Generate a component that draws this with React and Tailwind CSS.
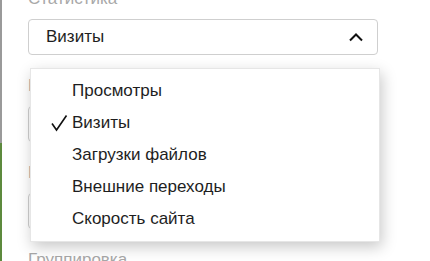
import React from "react";

function Chevron() {
  return (
    <svg width="16" height="10" viewBox="0 0 16 10" fill="none">
      <path d="M2 8.5 L8 2.5 L14 8.5" stroke="#111" strokeWidth="2" />
    </svg>
  );
}

function Check() {
  return (
    <svg width="18" height="18" viewBox="0 0 18 18" fill="none">
      <path d="M2 9.5 L6.5 16 L16.5 1.5" stroke="#111" strokeWidth="1.6" />
    </svg>
  );
}

function Field({ label, value, chevron }) {
  return (
    <div className="flex flex-col mb-[19px]">
      <div className="text-[17px] leading-[24px] text-[#a8a8a8] mb-2">{label}</div>
      <div className="h-[36px] w-[350px] border border-[#cfcfcf] rounded-[4px] flex items-center justify-between pl-[17px] pr-[13px] text-[17px] text-[#1e1e1e]">
        <span>{value}</span>
        {chevron ? <Chevron /> : null}
      </div>
    </div>
  );
}

const items = ["Просмотры", "Визиты", "Загрузки файлов", "Внешние переходы", "Скорость сайта"];

export default function App() {
  return (
    <div className="relative w-[430px] h-[261px] overflow-hidden bg-white flex" style={{ fontFamily: '"Liberation Sans", Arial, sans-serif' }}>
      <div className="w-[2px] flex flex-col shrink-0">
        <div className="h-[143px] bg-[#9a9a9a]"></div>
        <div className="flex-1 bg-[#5d8a3e]"></div>
      </div>
      <div className="pl-[26px] -mt-[13px] flex flex-col">
        <Field label="Статистика" value="Визиты" chevron />
        <Field label="Период" value="" />
        <Field label="Период" value="" />
        <div className="text-[17px] leading-[24px] text-[#a8a8a8]">Группировка</div>
      </div>
      <div className="absolute left-[30px] top-[68px] w-[350px] bg-white border border-[#e6e6e6] shadow-[2px_5px_14px_rgba(0,0,0,0.22)] py-[6px]">
        {items.map((it) => (
          <div key={it} className="relative h-[32px] flex items-center pl-[41px] text-[17px] text-[#1e1e1e]">
            {it === "Визиты" ? (
              <span className="absolute left-[19px] top-[7px] flex">
                <Check />
              </span>
            ) : null}
            <span>{it}</span>
          </div>
        ))}
      </div>
    </div>
  );
}
